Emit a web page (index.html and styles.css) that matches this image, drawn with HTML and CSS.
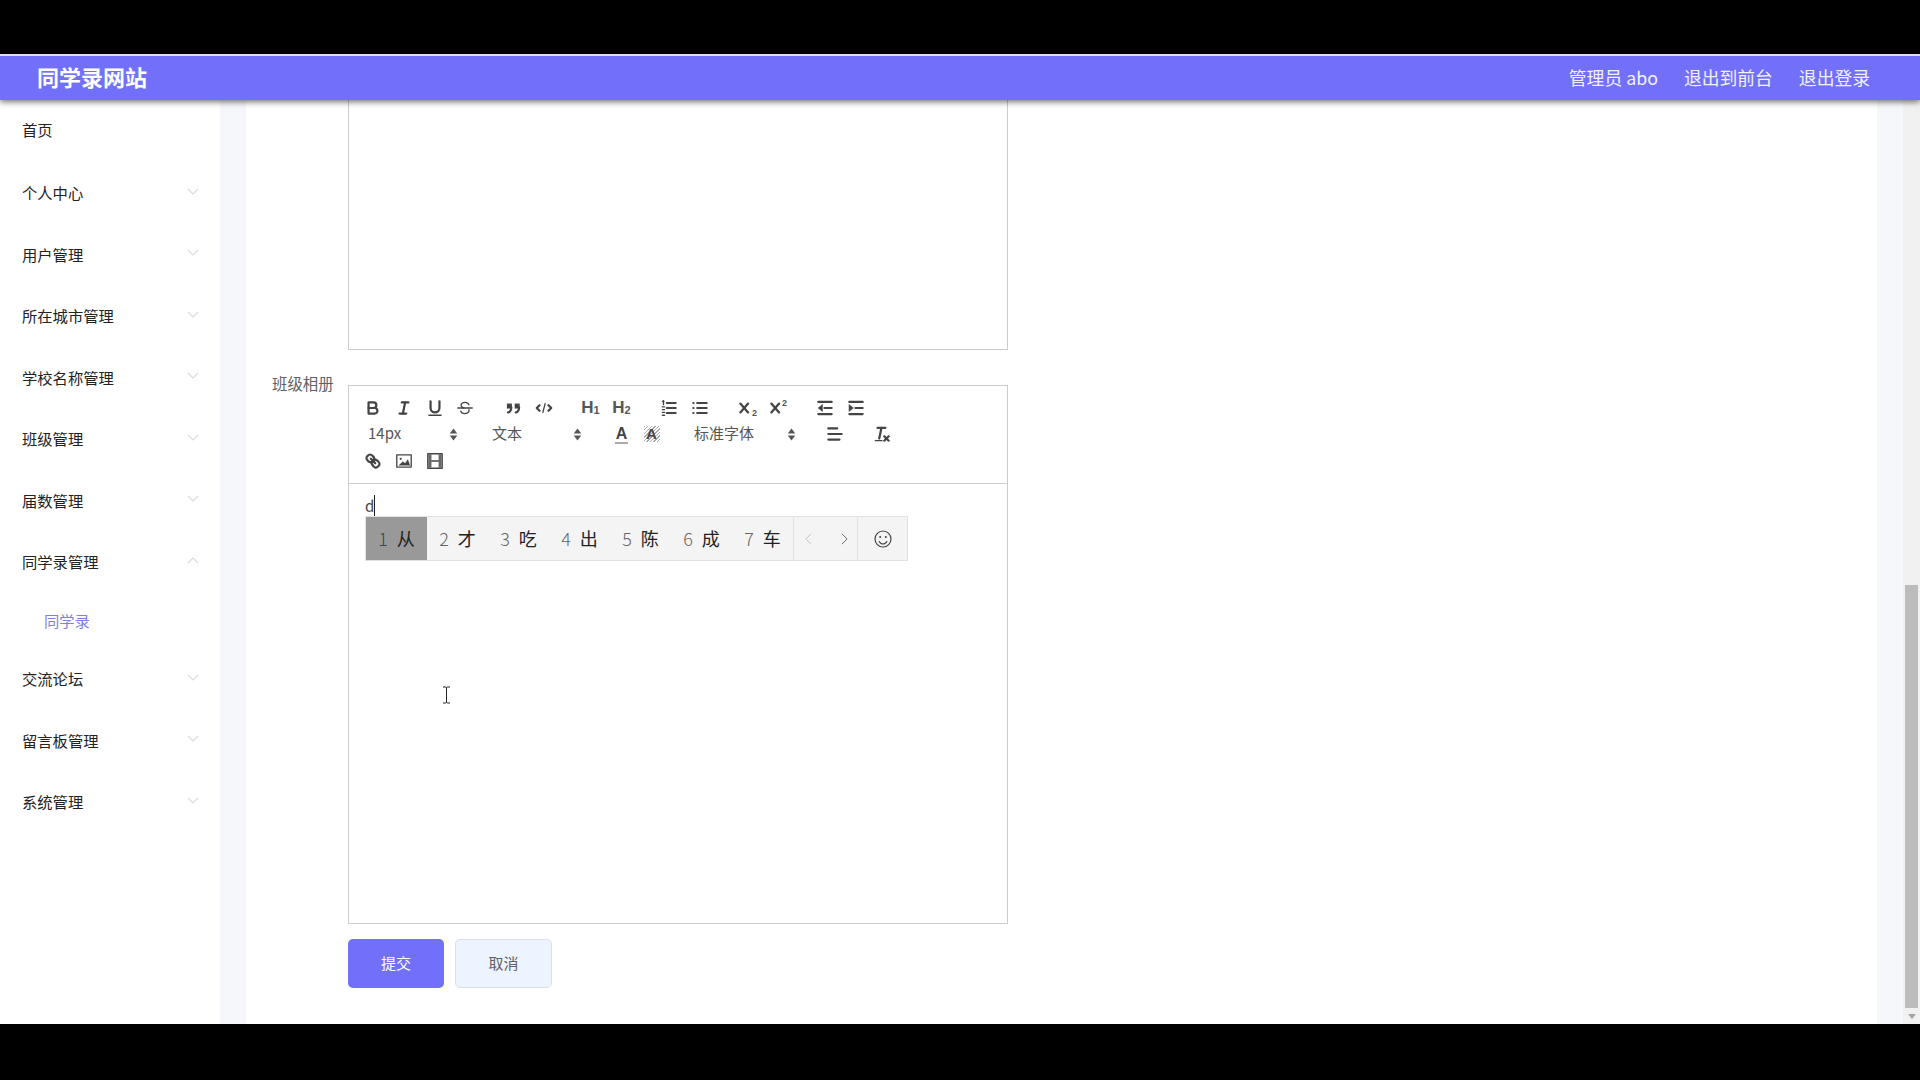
FILE: index.html
```html
<!DOCTYPE html>
<html lang="zh-CN">
<head>
    <meta charset="UTF-8">
    <meta name="viewport" content="width=device-width, initial-scale=1.0">
    <title>同学录网站</title>
    <link rel="stylesheet" href="styles.css">
</head>
<body>
    <div class="black-bar"></div>
    <div class="app">
        <header class="topbar">
            <div class="site-title">同学录网站</div>
            <nav class="top-links">
                <a href="#">管理员 abo</a>
                <a href="#">退出到前台</a>
                <a href="#">退出登录</a>
            </nav>
        </header>
        <div class="app-body">
            <aside class="sidebar">
                <div class="menu-item menu-home">首页</div>
                <div class="menu-item">个人中心<svg class="chev" viewBox="0 0 12 7"><polyline points="1,1 6,6 11,1"/></svg></div>
                <div class="menu-item">用户管理<svg class="chev" viewBox="0 0 12 7"><polyline points="1,1 6,6 11,1"/></svg></div>
                <div class="menu-item">所在城市管理<svg class="chev" viewBox="0 0 12 7"><polyline points="1,1 6,6 11,1"/></svg></div>
                <div class="menu-item">学校名称管理<svg class="chev" viewBox="0 0 12 7"><polyline points="1,1 6,6 11,1"/></svg></div>
                <div class="menu-item">班级管理<svg class="chev" viewBox="0 0 12 7"><polyline points="1,1 6,6 11,1"/></svg></div>
                <div class="menu-item">届数管理<svg class="chev" viewBox="0 0 12 7"><polyline points="1,1 6,6 11,1"/></svg></div>
                <div class="menu-item">同学录管理<svg class="chev" viewBox="0 0 12 7"><polyline points="1,6 6,1 11,6"/></svg></div>
                <div class="menu-sub">同学录</div>
                <div class="menu-item">交流论坛<svg class="chev" viewBox="0 0 12 7"><polyline points="1,1 6,6 11,1"/></svg></div>
                <div class="menu-item">留言板管理<svg class="chev" viewBox="0 0 12 7"><polyline points="1,1 6,6 11,1"/></svg></div>
                <div class="menu-item">系统管理<svg class="chev" viewBox="0 0 12 7"><polyline points="1,1 6,6 11,1"/></svg></div>
            </aside>
            <main class="main">
                <div class="panel">
                    <div class="prev-editor"></div>
                    <div class="form-row">
                        <label class="form-label">班级相册</label>
                        <div class="editor">
                            <div class="toolbar">
                                <div class="tool-row row-first">
                                    <div class="group">
                                        <span class="btn"><svg class="ic" viewBox="0 0 18 18"><path d="M5,4H9.5A2.5,2.5,0,0,1,12,6.5v0A2.5,2.5,0,0,1,9.5,9H5V4Z"/><path d="M5,9h5.5A2.5,2.5,0,0,1,13,11.5v0A2.5,2.5,0,0,1,10.5,14H5V9Z"/></svg></span>
                                        <span class="btn"><svg class="ic" viewBox="0 0 18 18"><line x1="7" x2="13" y1="4" y2="4"/><line x1="5" x2="11" y1="14" y2="14"/><line x1="8" x2="10" y1="14" y2="4"/></svg></span>
                                        <span class="btn"><svg class="ic" viewBox="0 0 18 18"><path d="M5,3V9a4,4,0,0,0,4,4h0a4,4,0,0,0,4-4V3"/><line x1="3.5" x2="14.5" y1="15.5" y2="15.5" class="thin"/></svg></span>
                                        <span class="btn btn-strike"><svg class="ic" viewBox="0 0 18 18"><path class="thin" d="M12.5,6C12,4.6,10.8,4,9,4C7,4,5.5,5,5.5,6.6C5.5,7.8,6.4,8.5,8,9"/><path class="thin" d="M12.6,10.5C13,12.8,11.3,14,9,14C7,14,5.6,13.2,5.2,11.8"/><line class="thin" x1="2.5" x2="15.5" y1="9" y2="9"/></svg></span>
                                    </div>
                                    <div class="group">
                                        <span class="btn"><svg class="ic" viewBox="0 0 18 18"><rect class="solid" x="3.5" y="5" width="4.5" height="4.5"/><rect class="solid" x="10.5" y="5" width="4.5" height="4.5"/><path d="M7.5,8.5c0,3-2,4.5-3,4.5"/><path d="M14.5,8.5c0,3-2,4.5-3,4.5"/></svg></span>
                                        <span class="btn"><svg class="ic" viewBox="0 0 18 18"><polyline points="5,6.5 2.5,9 5,11.5"/><polyline points="13,6.5 15.5,9 13,11.5"/><line class="thin" x1="10" x2="8" y1="5" y2="13"/></svg></span>
                                    </div>
                                    <div class="group">
                                        <span class="btn head">H<small>1</small></span>
                                        <span class="btn head">H<small>2</small></span>
                                    </div>
                                    <div class="group">
                                        <span class="btn"><svg class="ic" viewBox="0 0 18 18"><line x1="7" x2="15" y1="4.5" y2="4.5"/><line x1="7" x2="15" y1="9" y2="9"/><line x1="7" x2="15" y1="13.5" y2="13.5"/><line class="thin" x1="3" x2="4.5" y1="3" y2="3"/><line class="thin" x1="4" x2="4" y1="2.5" y2="6"/><line class="thin" x1="3" x2="5" y1="8" y2="8"/><line class="thin" x1="3" x2="5" y1="10.5" y2="10.5"/><line class="thin" x1="3" x2="5" y1="13" y2="13"/><line class="thin" x1="3" x2="5" y1="15.5" y2="15.5"/></svg></span>
                                        <span class="btn"><svg class="ic" viewBox="0 0 18 18"><line x1="6.5" x2="15" y1="4.5" y2="4.5"/><line x1="6.5" x2="15" y1="9" y2="9"/><line x1="6.5" x2="15" y1="13.5" y2="13.5"/><line x1="3" x2="3.2" y1="4.5" y2="4.5"/><line x1="3" x2="3.2" y1="9" y2="9"/><line x1="3" x2="3.2" y1="13.5" y2="13.5"/></svg></span>
                                    </div>
                                    <div class="group">
                                        <span class="btn"><svg class="ic" viewBox="0 0 18 18"><line x1="3" x2="10" y1="5" y2="13"/><line x1="10" x2="3" y1="5" y2="13"/></svg><span class="script low">2</span></span>
                                        <span class="btn"><svg class="ic" viewBox="0 0 18 18"><line x1="3" x2="10" y1="5" y2="13"/><line x1="10" x2="3" y1="5" y2="13"/></svg><span class="script high">2</span></span>
                                    </div>
                                    <div class="group">
                                        <span class="btn"><svg class="ic" viewBox="0 0 18 18"><line x1="3" x2="15" y1="3.5" y2="3.5"/><line x1="8.5" x2="15" y1="9" y2="9"/><line x1="3" x2="15" y1="14.5" y2="14.5"/><polygon class="solid" points="7,5.5 7,12.5 2.5,9"/></svg></span>
                                        <span class="btn"><svg class="ic" viewBox="0 0 18 18"><line x1="3" x2="15" y1="3.5" y2="3.5"/><line x1="8.5" x2="15" y1="9" y2="9"/><line x1="3" x2="15" y1="14.5" y2="14.5"/><polygon class="solid" points="2.5,5.5 2.5,12.5 7,9"/></svg></span>
                                    </div>
                                </div>
                                <div class="tool-row">
                                    <div class="group-tight">
                                        <span class="select">14px<svg class="updown" viewBox="0 0 8 14"><polygon points="0.5,6 7.5,6 4,1.5"/><polygon points="0.5,8 7.5,8 4,12.5"/></svg></span>
                                        <span class="select">文本<svg class="updown" viewBox="0 0 8 14"><polygon points="0.5,6 7.5,6 4,1.5"/><polygon points="0.5,8 7.5,8 4,12.5"/></svg></span>
                                    </div>
                                    <div class="group">
                                        <span class="btn color-a">A</span>
                                        <span class="btn bg-a"><span class="hatch">A</span></span>
                                    </div>
                                    <span class="select select-font">标准字体<svg class="updown" viewBox="0 0 8 14"><polygon points="0.5,6 7.5,6 4,1.5"/><polygon points="0.5,8 7.5,8 4,12.5"/></svg></span>
                                    <div class="group">
                                        <span class="btn"><svg class="ic" viewBox="0 0 18 18"><line x1="3" x2="11" y1="4" y2="4"/><line x1="3" x2="15" y1="9" y2="9"/><line x1="3" x2="13" y1="14" y2="14"/></svg></span>
                                    </div>
                                    <span class="btn tx"><svg class="ic" viewBox="0 0 18 18"><line x1="5" x2="12" y1="3.5" y2="3.5"/><line x1="8.5" x2="6.5" y1="3.5" y2="13"/><line class="thin" x1="3" x2="9" y1="15" y2="15"/><line x1="11" x2="15" y1="11" y2="15"/><line x1="15" x2="11" y1="11" y2="15"/></svg></span>
                                </div>
                                <div class="tool-row">
                                    <span class="btn"><svg class="ic" viewBox="0 0 18 18"><line x1="7" x2="11" y1="7" y2="11"/><path d="M8.9,4.577a3.476,3.476,0,0,1,.36,4.679A3.476,3.476,0,0,1,4.577,8.9C3.185,7.5,2.035,6.4,4.217,4.217S7.5,3.185,8.9,4.577Z"/><path d="M13.423,9.1a3.476,3.476,0,0,0-4.679-.36,3.476,3.476,0,0,0,.36,4.679c1.392,1.392,2.5,2.542,4.679.36S14.815,10.5,13.423,9.1Z"/></svg></span>
                                    <span class="btn"><svg class="ic" viewBox="0 0 18 18"><rect class="thin" x="2.5" y="3.5" width="13" height="11"/><circle class="solid" cx="6" cy="7" r="1"/><polygon class="solid" points="4,13 8,9.5 10,11 12.5,7.5 14.5,13"/></svg></span>
                                    <span class="btn"><svg class="ic" viewBox="0 0 18 18"><rect class="thin" x="2.5" y="2.5" width="13" height="13"/><rect class="grey" x="3" y="3" width="2.8" height="12"/><rect class="grey" x="12.2" y="3" width="2.8" height="12"/><line class="thin" x1="6" x2="12" y1="9" y2="9"/></svg></span>
                                </div>
                            </div>
                            <div class="editor-body">
                                <p class="typed"><span class="composing">d</span></p>
                                <div class="ime">
                                    <span class="cand active"><i>1</i>从</span>
                                    <span class="cand"><i>2</i>才</span>
                                    <span class="cand"><i>3</i>吃</span>
                                    <span class="cand"><i>4</i>出</span>
                                    <span class="cand"><i>5</i>陈</span>
                                    <span class="cand"><i>6</i>成</span>
                                    <span class="cand"><i>7</i>车</span>
                                    <span class="ime-pager">
                                        <svg class="pg off" viewBox="0 0 8 14"><polyline points="7,1 1,7 7,13"/></svg>
                                        <svg class="pg" viewBox="0 0 8 14"><polyline points="1,1 7,7 1,13"/></svg>
                                    </span>
                                    <span class="ime-emoji"><svg viewBox="0 0 20 20"><circle cx="10" cy="10" r="8"/><circle class="dot" cx="7.2" cy="8" r="1"/><circle class="dot" cx="12.8" cy="8" r="1"/><path d="M6,12.2c1,2,2.4,2.8,4,2.8s3-0.8,4-2.8"/></svg></span>
                                </div>
                                <svg class="ibeam" viewBox="0 0 9 18"><path d="M1,1H3.5C4,1,4.5,1.5,4.5,2V16C4.5,16.5,4,17,3.5,17H1M8,1H5.5C5,1,4.5,1.5,4.5,2M4.5,16C4.5,16.5,5,17,5.5,17H8"/></svg>
                            </div>
                        </div>
                    </div>
                    <div class="form-actions">
                        <button class="btn-primary">提交</button>
                        <button class="btn-cancel">取消</button>
                    </div>
                </div>
            </main>
            <div class="scrollbar">
                <div class="thumb"></div>
                <svg class="scroll-down" viewBox="0 0 8 5"><polygon points="0,0 8,0 4,5"/></svg>
            </div>
        </div>
    </div>
    <div class="black-bar bottom"></div>
</body>
</html>
```

FILE: styles.css
```css
html, body{
    margin: 0;
    padding: 0;
    height: 100%;
    overflow: hidden;
    background-color: #000;
    font-family: "Noto Sans CJK SC", "Liberation Sans", sans-serif;
}
.black-bar{
    height: 54px;
}
.black-bar.bottom{
    height: 56px;
}
.app{
    height: 970px;
    display: flex;
    flex-direction: column;
}
.topbar{
    height: 44px;
    border-top: 2px solid #dcdcff;
    background-color: #7270fb;
    display: flex;
    align-items: center;
    justify-content: space-between;
    padding: 0 50px 0 37px;
    box-shadow: rgba(0, 0, 0, 0.55) 0px 2px 6px;
    position: relative;
    z-index: 5;
    color: white;
}
.site-title{
    font-size: 22px;
    font-weight: bold;
    margin-bottom: 4px;
}
.top-links{
    display: flex;
    gap: 26px;
    margin-bottom: 3px;
}
.top-links a{
    color: #f2f2ff;
    font-size: 17.8px;
    text-decoration: none;
}
.app-body{
    flex: 1;
    display: flex;
    min-height: 0;
}
.sidebar{
    width: 220px;
    background-color: white;
    flex-shrink: 0;
}
.menu-item{
    height: 61.5px;
    display: flex;
    align-items: center;
    justify-content: space-between;
    padding: 0 21px 0 22px;
    font-size: 15.3px;
    color: #222;
}
.menu-home{
    height: 57px;
    margin-bottom: 4.4px;
}
.menu-sub{
    height: 55.5px;
    display: flex;
    align-items: center;
    padding-left: 44px;
    font-size: 15.3px;
    color: #7f7de8;
}
.chev{
    width: 12px;
    height: 7px;
    margin: 0 0 2px 0;
    fill: none;
    stroke: #dcdcdc;
    stroke-width: 1.2;
}
.main{
    flex: 1;
    background-color: #f6f7fb;
    padding: 0 26px;
    min-width: 0;
}
.panel{
    background-color: white;
    height: 100%;
    padding-left: 102px;
    box-sizing: border-box;
}
.prev-editor{
    width: 660px;
    height: 250px;
    box-sizing: border-box;
    border: 1px solid #ccc;
    border-top: none;
}
.form-row{
    margin-top: 22px;
    margin-left: -102px;
    display: flex;
}
.form-label{
    width: 102px;
    padding-left: 26px;
    box-sizing: border-box;
    flex-shrink: 0;
    line-height: 22px;
    font-size: 15.4px;
    color: #606266;
}
.editor{
    width: 660px;
    height: 539px;
    margin-top: 13px;
    box-sizing: border-box;
    border: 1px solid #ccc;
    display: flex;
    flex-direction: column;
}
.toolbar{
    height: 98px;
    box-sizing: border-box;
    padding: 8.5px 8px 0;
    border-bottom: 1px solid #ccc;
    flex-shrink: 0;
}
.tool-row{
    display: flex;
    height: 27px;
    align-items: center;
}
.row-first{
    height: 26px;
}
.group{
    display: flex;
    margin-right: 16px;
}
.group-tight{
    display: flex;
}
.btn{
    width: 31px;
    height: 27px;
    display: flex;
    align-items: center;
    justify-content: center;
    position: relative;
    color: #444;
}
.btn-strike{
    left: -1px;
}
.ic{
    width: 20px;
    height: 20px;
    fill: none;
    stroke: #444;
    stroke-width: 2;
    stroke-linecap: round;
    stroke-linejoin: round;
}
.ic .thin{
    stroke-width: 1.2;
}
.ic .solid{
    fill: #444;
    stroke: none;
}
.ic .grey{
    fill: #666;
    stroke: none;
}
.head{
    font-family: "Liberation Sans", sans-serif;
    font-size: 17px;
    font-weight: bold;
    color: #555;
}
.head small{
    font-size: 11px;
    margin-top: 5px;
}
.script{
    position: absolute;
    font-family: "Liberation Sans", sans-serif;
    font-size: 9px;
    font-weight: bold;
    color: #555;
}
.script.low{
    right: 5px;
    bottom: 3px;
}
.script.high{
    right: 6px;
    top: 4px;
}
.select{
    width: 124px;
    height: 27px;
    box-sizing: border-box;
    padding: 0 23px 3px 11px;
    display: flex;
    align-items: center;
    justify-content: space-between;
    font-size: 15px;
    color: #555;
}
.select-font{
    padding-right: 11px;
    margin-right: 12px;
}
.updown{
    width: 9px;
    height: 15px;
    fill: #555;
    margin-top: 3px;
}
.color-a{
    font-family: "Liberation Sans", sans-serif;
    font-size: 16px;
    font-weight: bold;
    line-height: 17px;
    padding-left: 2px;
    box-sizing: border-box;
    padding-bottom: 2px;
}
.color-a::after{
    content: "";
    position: absolute;
    left: 10px;
    right: 8px;
    bottom: 4px;
    height: 2px;
    background-color: #aaa;
}
.hatch{
    width: 16px;
    height: 16px;
    display: block;
    text-align: center;
    font-family: "Liberation Sans", sans-serif;
    font-size: 15px;
    font-weight: bold;
    line-height: 16px;
    color: #444;
    background-image: repeating-linear-gradient(135deg, #aaa 0, #aaa 1px, #fff 1px, #fff 2.5px);
}
.editor-body{
    flex: 1;
    position: relative;
    padding: 11px 16px;
}
.typed{
    margin: 0;
    font-size: 15px;
    line-height: 22px;
    color: #444;
}
.composing{
    border-bottom: 1px dotted #444;
    border-right: 1px solid #222;
}
.ime{
    position: absolute;
    left: 16px;
    top: 32px;
    height: 45px;
    box-sizing: border-box;
    display: flex;
    border: 1px solid #e2e2e2;
    background-color: #f4f4f4;
    color: #222;
    font-size: 18px;
}
.cand{
    width: 61px;
    display: flex;
    align-items: center;
    justify-content: center;
    gap: 9px;
    padding-bottom: 2px;
    box-sizing: border-box;
}
.cand i{
    font-style: normal;
    font-weight: 300;
    color: #666;
}
.cand.active{
    background-color: #999;
    color: #222;
}
.cand.active i{
    color: #444;
}
.ime-pager{
    width: 65px;
    display: flex;
    align-items: center;
    justify-content: space-between;
    box-sizing: border-box;
    padding: 0 9px 0 11px;
    border-left: 1px solid #e2e2e2;
    border-right: 1px solid #e2e2e2;
}
.pg{
    width: 7px;
    height: 12px;
    fill: none;
    stroke: #555;
    stroke-width: 1;
}
.pg.off{
    stroke: #bbb;
}
.ime-emoji{
    width: 49px;
    display: flex;
    align-items: center;
    justify-content: center;
}
.ime-emoji svg{
    width: 20px;
    height: 20px;
    fill: none;
    stroke: #444;
    stroke-width: 1.2;
}
.ime-emoji .dot{
    fill: #444;
    stroke: none;
}
.ibeam{
    position: absolute;
    left: 93px;
    top: 202px;
    width: 9px;
    height: 18px;
    fill: none;
    stroke: #222;
    stroke-width: 1;
}
.form-actions{
    margin-top: 15px;
    display: flex;
    gap: 11px;
}
.form-actions button{
    height: 49px;
    box-sizing: border-box;
    border-radius: 5px;
    font-family: inherit;
    font-size: 15px;
    padding: 0 0 2px;
    cursor: pointer;
}
.form-actions .btn-primary{
    width: 96px;
    border: none;
    background-color: #7270fb;
    color: white;
}
.form-actions .btn-cancel{
    width: 97px;
    border: 1px solid #dcdfe6;
    background-color: #ecf5ff;
    color: #606266;
}
.scrollbar{
    width: 17px;
    flex-shrink: 0;
    background-color: #f1f1f1;
    position: relative;
}
.thumb{
    position: absolute;
    left: 2px;
    right: 2px;
    top: 485px;
    bottom: 16px;
    background-color: #bcbcbc;
}
.scroll-down{
    position: absolute;
    left: 5px;
    bottom: 5px;
    width: 8px;
    height: 5px;
    fill: #a3a3a3;
}
```
